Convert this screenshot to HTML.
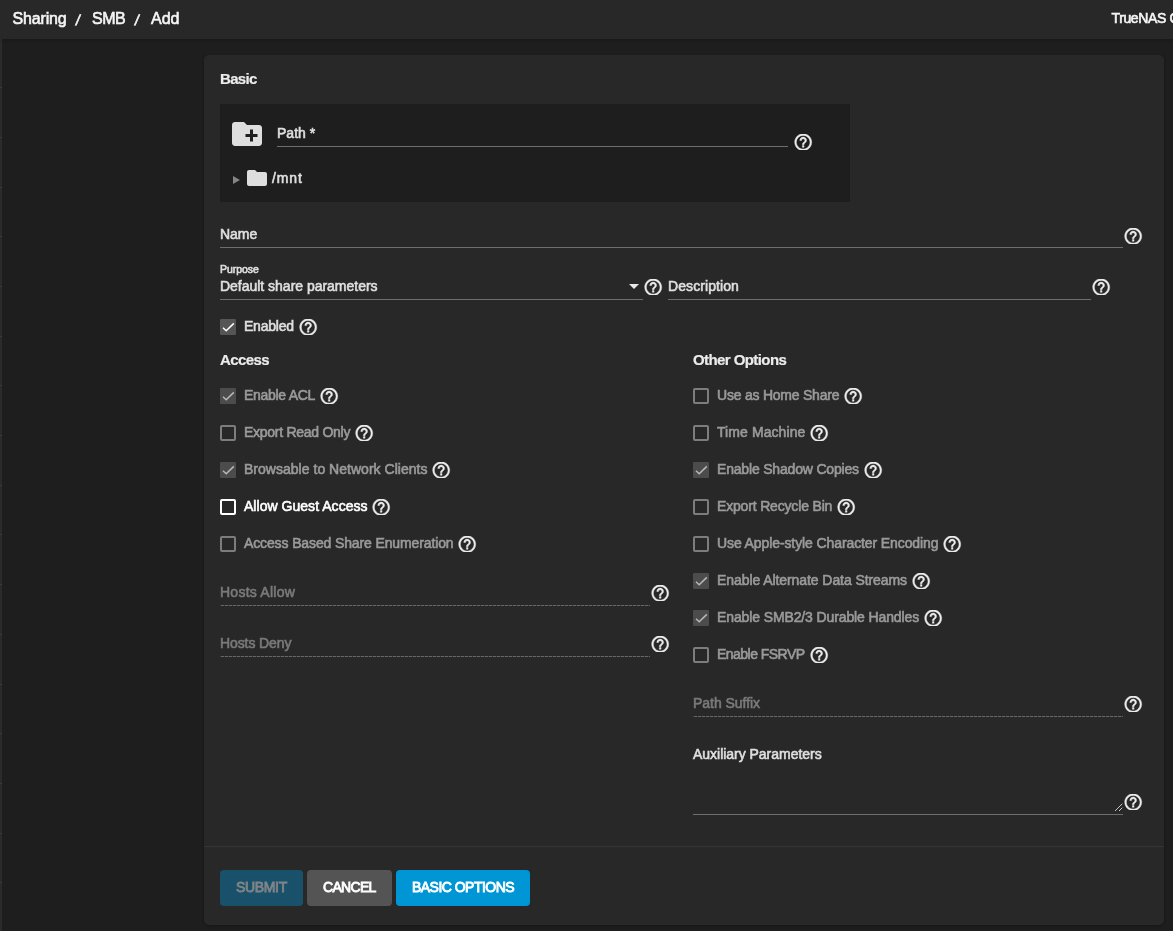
<!DOCTYPE html>
<html lang="en">
<head>
<meta charset="utf-8">
<title>Sharing / SMB / Add</title>
<style>
html,body{margin:0;padding:0}
body{width:1173px;height:931px;overflow:hidden;background:#1e1e1e;position:relative;font-family:"Liberation Sans", sans-serif;color:#dfdfdf;-webkit-font-smoothing:antialiased}
.layer{position:absolute;left:0;top:0;width:1173px;height:931px;will-change:transform;transform:translateZ(0)}
.t{position:absolute;white-space:nowrap;-webkit-text-stroke:0.6px currentColor}
.t.sl{transform:skewX(-9deg)}
.t.med{-webkit-text-stroke:0.85px currentColor}
.t.bold{-webkit-text-stroke:0.2px currentColor;color:#ececec}
.abs{position:absolute}
.strip{position:absolute;left:0;top:0;width:2px;height:931px;background:#2b2b2b}
.tick{position:absolute;left:0;width:2px;height:1px;background:#3a3a3a}
.topbar{position:absolute;left:2px;top:0;width:1171px;height:39px;background:#282828;box-shadow:0 1px 3px rgba(0,0,0,.25)}
.card{position:absolute;left:204px;top:55px;width:960px;height:870px;background:#282828;border-radius:5px;box-shadow:0 1px 3px rgba(0,0,0,.3)}
.pathbox{position:absolute;left:220px;top:104px;width:630px;height:98px;background:#1e1e1e}
.divider{position:absolute;left:204px;top:846px;width:960px;height:1px;background:#343434}
.ln{position:absolute;height:1px;background:#6e6e6e}
.ln.dash{background:repeating-linear-gradient(90deg,#3c3c3c 0,#3c3c3c 1px,#676767 1px,#676767 4px)}
.help{position:absolute;width:20.400px;height:16.200px;overflow:hidden;color:#ececec;display:block}
.help svg{position:absolute;left:0;top:-2.050px}
.cb{position:absolute;width:16px;height:16px;box-sizing:border-box;border:2px solid #fff;border-radius:2px;color:#fff}
.cb.dis{border:2px solid #7d7d7d;color:#b8b8b8}
.cb.on{border:0;background:#555;border-radius:1px}
.cb.on.dis{background:#4c4c4c}
.cb svg{position:absolute;left:0;top:0}
.tri{position:absolute;width:0;height:0;border-left:7px solid #858585;border-top:4.500px solid transparent;border-bottom:4.500px solid transparent}
.arrow{position:absolute;width:0;height:0;border-top:5px solid #e8e8e8;border-left:5px solid transparent;border-right:5px solid transparent}
.btn{position:absolute;top:870px;height:36px;border-radius:4px}
.submit{background:#19516b}
.cancel{background:#545454}
.basic{background:#0095d5}
</style>
</head>
<body>
<div class="layer">
<div class="strip"></div>
<div class="tick" style="top:87px"></div>
<div class="tick" style="top:137px"></div>
<div class="tick" style="top:187px"></div>
<div class="tick" style="top:236px"></div>
<div class="tick" style="top:286px"></div>
<div class="tick" style="top:336px"></div>
<div class="tick" style="top:385px"></div>
<div class="tick" style="top:435px"></div>
<div class="tick" style="top:485px"></div>
<div class="tick" style="top:534px"></div>
<div class="tick" style="top:584px"></div>
<div class="tick" style="top:634px"></div>
<div class="tick" style="top:684px"></div>
<div class="tick" style="top:733px"></div>
<div class="tick" style="top:783px"></div>
<div class="tick" style="top:833px"></div>
<div class="tick" style="top:882px"></div>
<div class="topbar"></div>
<div class="card"></div>
<div class="pathbox"></div>
<div class="divider"></div>
<span class="t " id="t1" style="left:12.5px;top:8.5px;font-size:16px;line-height:20px;color:#f6f6f6;letter-spacing:-0.154px;">Sharing</span>
<span class="t sl" id="t2" style="left:75.5px;top:10px;font-size:14.5px;line-height:20px;color:#f6f6f6;">/</span>
<span class="t " id="t3" style="left:92px;top:8.5px;font-size:16px;line-height:20px;color:#f6f6f6;letter-spacing:-0.494px;">SMB</span>
<span class="t sl" id="t4" style="left:134.5px;top:10px;font-size:14.5px;line-height:20px;color:#f6f6f6;">/</span>
<span class="t " id="t5" style="left:151px;top:8.5px;font-size:16px;line-height:20px;color:#f6f6f6;letter-spacing:0.006px;">Add</span>
<span class="t " id="t6" style="left:1111.5px;top:8px;font-size:14px;line-height:20px;color:#f6f6f6;letter-spacing:-0.375px;">TrueNAS C</span>
<span class="t  bold" id="t7" style="left:220px;top:70px;font-size:15px;line-height:18px;font-weight:700;letter-spacing:-0.696px;">Basic</span>
<svg class="abs" style="left:229px;top:116px" width="36" height="36" viewBox="0 0 24 24"><path fill="#dedede" d="M20 6h-8l-2-2H4c-1.110 0-1.990.89-1.990 2L2 18c0 1.110.89 2 2 2h16c1.110 0 2-.89 2-2V8c0-1.110-.89-2-2-2zm-1 8h-3v3h-2v-3h-3v-2h3V9h2v3h3v2z"/></svg>
<span class="t " id="t8" style="left:277px;top:124.5px;font-size:14px;line-height:17px;letter-spacing:0.006px;">Path *</span>
<div class="ln" style="left:277px;top:146px;width:511px;background:#6e6e6e;"></div>
<span class="help" style="left:792.8px;top:133.8px"><svg viewBox="0 0 24 24" width="20.400" height="20.400"><path fill="currentColor" stroke="currentColor" stroke-width=".5" d="M11 18h2v-2h-2v2zm1-16C6.48 2 2 6.48 2 12s4.48 10 10 10 10-4.48 10-10S17.52 2 12 2zm0 18c-4.41 0-8-3.59-8-8s3.590-8 8-8 8 3.590 8 8-3.590 8-8 8zm0-14c-2.210 0-4 1.790-4 4h2c0-1.100.9-2 2-2s2 .9 2 2c0 2-3 1.750-3 5h2c0-2.250 3-2.500 3-5 0-2.210-1.790-4-4-4z"/></svg></span>
<span class="tri" style="left:233px;top:175.500px"></span>
<svg class="abs" style="left:245px;top:166px" width="24" height="24" viewBox="0 0 24 24"><path fill="#dedede" d="M10 4H4c-1.100 0-1.990.9-1.990 2L2 18c0 1.100.9 2 2 2h16c1.100 0 2-.9 2-2V8c0-1.100-.9-2-2-2h-8l-2-2z"/></svg>
<span class="t " id="t9" style="left:272px;top:169.5px;font-size:14px;line-height:17px;letter-spacing:0.897px;">/mnt</span>
<span class="t " id="t10" style="left:220px;top:225.5px;font-size:14px;line-height:17px;letter-spacing:-0.013px;">Name</span>
<div class="ln" style="left:220px;top:247px;width:903px;background:#6e6e6e;"></div>
<span class="help" style="left:1122.8px;top:227.8px"><svg viewBox="0 0 24 24" width="20.400" height="20.400"><path fill="currentColor" stroke="currentColor" stroke-width=".5" d="M11 18h2v-2h-2v2zm1-16C6.48 2 2 6.48 2 12s4.48 10 10 10 10-4.48 10-10S17.52 2 12 2zm0 18c-4.41 0-8-3.59-8-8s3.590-8 8-8 8 3.590 8 8-3.590 8-8 8zm0-14c-2.210 0-4 1.790-4 4h2c0-1.100.9-2 2-2s2 .9 2 2c0 2-3 1.750-3 5h2c0-2.250 3-2.500 3-5 0-2.210-1.790-4-4-4z"/></svg></span>
<span class="t " id="t11" style="left:220px;top:263px;font-size:10.5px;line-height:12px;letter-spacing:-0.041px;">Purpose</span>
<span class="t " id="t12" style="left:220px;top:277.5px;font-size:14px;line-height:17px;letter-spacing:-0.017px;">Default share parameters</span>
<span class="arrow" style="left:628.500px;top:284px"></span>
<div class="ln" style="left:220px;top:299px;width:423px;background:#6e6e6e;"></div>
<span class="help" style="left:642.8px;top:278.8px"><svg viewBox="0 0 24 24" width="20.400" height="20.400"><path fill="currentColor" stroke="currentColor" stroke-width=".5" d="M11 18h2v-2h-2v2zm1-16C6.48 2 2 6.48 2 12s4.48 10 10 10 10-4.48 10-10S17.52 2 12 2zm0 18c-4.41 0-8-3.59-8-8s3.590-8 8-8 8 3.590 8 8-3.590 8-8 8zm0-14c-2.210 0-4 1.790-4 4h2c0-1.100.9-2 2-2s2 .9 2 2c0 2-3 1.750-3 5h2c0-2.250 3-2.500 3-5 0-2.210-1.790-4-4-4z"/></svg></span>
<span class="t " id="t13" style="left:668px;top:277.5px;font-size:14px;line-height:17px;letter-spacing:0.08px;">Description</span>
<div class="ln" style="left:668px;top:299px;width:423px;background:#6e6e6e;"></div>
<span class="help" style="left:1090.8px;top:278.8px"><svg viewBox="0 0 24 24" width="20.400" height="20.400"><path fill="currentColor" stroke="currentColor" stroke-width=".5" d="M11 18h2v-2h-2v2zm1-16C6.48 2 2 6.48 2 12s4.48 10 10 10 10-4.48 10-10S17.52 2 12 2zm0 18c-4.41 0-8-3.59-8-8s3.590-8 8-8 8 3.590 8 8-3.590 8-8 8zm0-14c-2.210 0-4 1.790-4 4h2c0-1.100.9-2 2-2s2 .9 2 2c0 2-3 1.750-3 5h2c0-2.250 3-2.500 3-5 0-2.210-1.790-4-4-4z"/></svg></span>
<span class="cb on" style="left:220px;top:319px"><svg viewBox="0 0 16 16" width="16" height="16"><path d="M3 8.700 6.200 11.700 13.800 4.400" fill="none" stroke="currentColor" stroke-width="1.500"/></svg></span>
<span class="t " id="t14" style="left:244px;top:317.5px;font-size:14px;line-height:17px;letter-spacing:-0.231px;">Enabled</span>
<span class="help" style="left:297.8px;top:318.8px"><svg viewBox="0 0 24 24" width="20.400" height="20.400"><path fill="currentColor" stroke="currentColor" stroke-width=".5" d="M11 18h2v-2h-2v2zm1-16C6.48 2 2 6.48 2 12s4.48 10 10 10 10-4.48 10-10S17.52 2 12 2zm0 18c-4.41 0-8-3.59-8-8s3.590-8 8-8 8 3.590 8 8-3.590 8-8 8zm0-14c-2.210 0-4 1.790-4 4h2c0-1.100.9-2 2-2s2 .9 2 2c0 2-3 1.750-3 5h2c0-2.250 3-2.500 3-5 0-2.210-1.790-4-4-4z"/></svg></span>
<span class="t  bold" id="t15" style="left:220px;top:351px;font-size:15px;line-height:18px;font-weight:700;letter-spacing:-0.605px;">Access</span>
<span class="t  bold" id="t16" style="left:693px;top:351px;font-size:15px;line-height:18px;font-weight:700;letter-spacing:-0.584px;">Other Options</span>
<span class="cb on dis" style="left:220px;top:388px"><svg viewBox="0 0 16 16" width="16" height="16"><path d="M3 8.700 6.200 11.700 13.800 4.400" fill="none" stroke="currentColor" stroke-width="1.500"/></svg></span>
<span class="t " id="t17" style="left:244px;top:386.5px;font-size:14px;line-height:17px;color:#9a9a9a;letter-spacing:-0.291px;">Enable ACL</span>
<span class="help" style="left:319px;top:387.8px"><svg viewBox="0 0 24 24" width="20.400" height="20.400"><path fill="currentColor" stroke="currentColor" stroke-width=".5" d="M11 18h2v-2h-2v2zm1-16C6.48 2 2 6.48 2 12s4.48 10 10 10 10-4.48 10-10S17.52 2 12 2zm0 18c-4.41 0-8-3.59-8-8s3.590-8 8-8 8 3.590 8 8-3.590 8-8 8zm0-14c-2.210 0-4 1.790-4 4h2c0-1.100.9-2 2-2s2 .9 2 2c0 2-3 1.750-3 5h2c0-2.250 3-2.500 3-5 0-2.210-1.790-4-4-4z"/></svg></span>
<span class="cb dis" style="left:220px;top:425px"></span>
<span class="t " id="t18" style="left:244px;top:423.5px;font-size:14px;line-height:17px;color:#9a9a9a;letter-spacing:-0.27px;">Export Read Only</span>
<span class="help" style="left:354.3px;top:424.8px"><svg viewBox="0 0 24 24" width="20.400" height="20.400"><path fill="currentColor" stroke="currentColor" stroke-width=".5" d="M11 18h2v-2h-2v2zm1-16C6.48 2 2 6.48 2 12s4.48 10 10 10 10-4.48 10-10S17.52 2 12 2zm0 18c-4.41 0-8-3.59-8-8s3.590-8 8-8 8 3.590 8 8-3.590 8-8 8zm0-14c-2.210 0-4 1.790-4 4h2c0-1.100.9-2 2-2s2 .9 2 2c0 2-3 1.750-3 5h2c0-2.250 3-2.500 3-5 0-2.210-1.790-4-4-4z"/></svg></span>
<span class="cb on dis" style="left:220px;top:462px"><svg viewBox="0 0 16 16" width="16" height="16"><path d="M3 8.700 6.200 11.700 13.800 4.400" fill="none" stroke="currentColor" stroke-width="1.500"/></svg></span>
<span class="t " id="t19" style="left:244px;top:460.5px;font-size:14px;line-height:17px;color:#9a9a9a;letter-spacing:0.021px;">Browsable to Network Clients</span>
<span class="help" style="left:431px;top:461.8px"><svg viewBox="0 0 24 24" width="20.400" height="20.400"><path fill="currentColor" stroke="currentColor" stroke-width=".5" d="M11 18h2v-2h-2v2zm1-16C6.48 2 2 6.48 2 12s4.48 10 10 10 10-4.48 10-10S17.52 2 12 2zm0 18c-4.41 0-8-3.59-8-8s3.590-8 8-8 8 3.590 8 8-3.590 8-8 8zm0-14c-2.210 0-4 1.790-4 4h2c0-1.100.9-2 2-2s2 .9 2 2c0 2-3 1.750-3 5h2c0-2.250 3-2.500 3-5 0-2.210-1.790-4-4-4z"/></svg></span>
<span class="cb" style="left:220px;top:499px"></span>
<span class="t " id="t20" style="left:244px;top:497.5px;font-size:14px;line-height:17px;color:#fff;letter-spacing:0.035px;">Allow Guest Access</span>
<span class="help" style="left:371.1px;top:498.8px"><svg viewBox="0 0 24 24" width="20.400" height="20.400"><path fill="currentColor" stroke="currentColor" stroke-width=".5" d="M11 18h2v-2h-2v2zm1-16C6.48 2 2 6.48 2 12s4.48 10 10 10 10-4.48 10-10S17.52 2 12 2zm0 18c-4.41 0-8-3.59-8-8s3.590-8 8-8 8 3.590 8 8-3.590 8-8 8zm0-14c-2.210 0-4 1.790-4 4h2c0-1.100.9-2 2-2s2 .9 2 2c0 2-3 1.750-3 5h2c0-2.250 3-2.500 3-5 0-2.210-1.790-4-4-4z"/></svg></span>
<span class="cb dis" style="left:220px;top:536px"></span>
<span class="t " id="t21" style="left:244px;top:534.5px;font-size:14px;line-height:17px;color:#9a9a9a;letter-spacing:-0.125px;">Access Based Share Enumeration</span>
<span class="help" style="left:457px;top:535.8px"><svg viewBox="0 0 24 24" width="20.400" height="20.400"><path fill="currentColor" stroke="currentColor" stroke-width=".5" d="M11 18h2v-2h-2v2zm1-16C6.48 2 2 6.48 2 12s4.48 10 10 10 10-4.48 10-10S17.52 2 12 2zm0 18c-4.41 0-8-3.59-8-8s3.590-8 8-8 8 3.590 8 8-3.590 8-8 8zm0-14c-2.210 0-4 1.790-4 4h2c0-1.100.9-2 2-2s2 .9 2 2c0 2-3 1.750-3 5h2c0-2.250 3-2.500 3-5 0-2.210-1.790-4-4-4z"/></svg></span>
<span class="cb dis" style="left:693px;top:388px"></span>
<span class="t " id="t22" style="left:717px;top:386.5px;font-size:14px;line-height:17px;color:#9a9a9a;letter-spacing:-0.225px;">Use as Home Share</span>
<span class="help" style="left:843.3px;top:387.8px"><svg viewBox="0 0 24 24" width="20.400" height="20.400"><path fill="currentColor" stroke="currentColor" stroke-width=".5" d="M11 18h2v-2h-2v2zm1-16C6.48 2 2 6.48 2 12s4.48 10 10 10 10-4.48 10-10S17.52 2 12 2zm0 18c-4.41 0-8-3.59-8-8s3.590-8 8-8 8 3.590 8 8-3.590 8-8 8zm0-14c-2.210 0-4 1.790-4 4h2c0-1.100.9-2 2-2s2 .9 2 2c0 2-3 1.750-3 5h2c0-2.250 3-2.500 3-5 0-2.210-1.790-4-4-4z"/></svg></span>
<span class="cb dis" style="left:693px;top:425px"></span>
<span class="t " id="t23" style="left:717px;top:423.5px;font-size:14px;line-height:17px;color:#9a9a9a;letter-spacing:0.084px;">Time Machine</span>
<span class="help" style="left:809.3px;top:424.8px"><svg viewBox="0 0 24 24" width="20.400" height="20.400"><path fill="currentColor" stroke="currentColor" stroke-width=".5" d="M11 18h2v-2h-2v2zm1-16C6.48 2 2 6.48 2 12s4.48 10 10 10 10-4.48 10-10S17.52 2 12 2zm0 18c-4.41 0-8-3.59-8-8s3.590-8 8-8 8 3.590 8 8-3.590 8-8 8zm0-14c-2.210 0-4 1.790-4 4h2c0-1.100.9-2 2-2s2 .9 2 2c0 2-3 1.750-3 5h2c0-2.250 3-2.500 3-5 0-2.210-1.790-4-4-4z"/></svg></span>
<span class="cb on dis" style="left:693px;top:462px"><svg viewBox="0 0 16 16" width="16" height="16"><path d="M3 8.700 6.200 11.700 13.800 4.400" fill="none" stroke="currentColor" stroke-width="1.500"/></svg></span>
<span class="t " id="t24" style="left:717px;top:460.5px;font-size:14px;line-height:17px;color:#9a9a9a;letter-spacing:-0.182px;">Enable Shadow Copies</span>
<span class="help" style="left:863px;top:461.8px"><svg viewBox="0 0 24 24" width="20.400" height="20.400"><path fill="currentColor" stroke="currentColor" stroke-width=".5" d="M11 18h2v-2h-2v2zm1-16C6.48 2 2 6.48 2 12s4.48 10 10 10 10-4.48 10-10S17.52 2 12 2zm0 18c-4.41 0-8-3.59-8-8s3.590-8 8-8 8 3.590 8 8-3.590 8-8 8zm0-14c-2.210 0-4 1.790-4 4h2c0-1.100.9-2 2-2s2 .9 2 2c0 2-3 1.750-3 5h2c0-2.250 3-2.500 3-5 0-2.210-1.790-4-4-4z"/></svg></span>
<span class="cb dis" style="left:693px;top:499px"></span>
<span class="t " id="t25" style="left:717px;top:497.5px;font-size:14px;line-height:17px;color:#9a9a9a;letter-spacing:-0.171px;">Export Recycle Bin</span>
<span class="help" style="left:836.3px;top:498.8px"><svg viewBox="0 0 24 24" width="20.400" height="20.400"><path fill="currentColor" stroke="currentColor" stroke-width=".5" d="M11 18h2v-2h-2v2zm1-16C6.48 2 2 6.48 2 12s4.48 10 10 10 10-4.48 10-10S17.52 2 12 2zm0 18c-4.41 0-8-3.59-8-8s3.590-8 8-8 8 3.590 8 8-3.590 8-8 8zm0-14c-2.210 0-4 1.790-4 4h2c0-1.100.9-2 2-2s2 .9 2 2c0 2-3 1.750-3 5h2c0-2.250 3-2.500 3-5 0-2.210-1.790-4-4-4z"/></svg></span>
<span class="cb dis" style="left:693px;top:536px"></span>
<span class="t " id="t26" style="left:717px;top:534.5px;font-size:14px;line-height:17px;color:#9a9a9a;letter-spacing:-0.103px;">Use Apple-style Character Encoding</span>
<span class="help" style="left:942.4px;top:535.8px"><svg viewBox="0 0 24 24" width="20.400" height="20.400"><path fill="currentColor" stroke="currentColor" stroke-width=".5" d="M11 18h2v-2h-2v2zm1-16C6.48 2 2 6.48 2 12s4.48 10 10 10 10-4.48 10-10S17.52 2 12 2zm0 18c-4.41 0-8-3.59-8-8s3.590-8 8-8 8 3.590 8 8-3.590 8-8 8zm0-14c-2.210 0-4 1.790-4 4h2c0-1.100.9-2 2-2s2 .9 2 2c0 2-3 1.750-3 5h2c0-2.250 3-2.500 3-5 0-2.210-1.790-4-4-4z"/></svg></span>
<span class="cb on dis" style="left:693px;top:573px"><svg viewBox="0 0 16 16" width="16" height="16"><path d="M3 8.700 6.200 11.700 13.800 4.400" fill="none" stroke="currentColor" stroke-width="1.500"/></svg></span>
<span class="t " id="t27" style="left:717px;top:571.5px;font-size:14px;line-height:17px;color:#9a9a9a;letter-spacing:-0.075px;">Enable Alternate Data Streams</span>
<span class="help" style="left:911px;top:572.8px"><svg viewBox="0 0 24 24" width="20.400" height="20.400"><path fill="currentColor" stroke="currentColor" stroke-width=".5" d="M11 18h2v-2h-2v2zm1-16C6.48 2 2 6.48 2 12s4.48 10 10 10 10-4.48 10-10S17.52 2 12 2zm0 18c-4.41 0-8-3.59-8-8s3.590-8 8-8 8 3.590 8 8-3.590 8-8 8zm0-14c-2.210 0-4 1.790-4 4h2c0-1.100.9-2 2-2s2 .9 2 2c0 2-3 1.750-3 5h2c0-2.250 3-2.500 3-5 0-2.210-1.790-4-4-4z"/></svg></span>
<span class="cb on dis" style="left:693px;top:610px"><svg viewBox="0 0 16 16" width="16" height="16"><path d="M3 8.700 6.200 11.700 13.800 4.400" fill="none" stroke="currentColor" stroke-width="1.500"/></svg></span>
<span class="t " id="t28" style="left:717px;top:608.5px;font-size:14px;line-height:17px;color:#9a9a9a;letter-spacing:-0.116px;">Enable SMB2/3 Durable Handles</span>
<span class="help" style="left:923.1px;top:609.8px"><svg viewBox="0 0 24 24" width="20.400" height="20.400"><path fill="currentColor" stroke="currentColor" stroke-width=".5" d="M11 18h2v-2h-2v2zm1-16C6.48 2 2 6.48 2 12s4.48 10 10 10 10-4.48 10-10S17.52 2 12 2zm0 18c-4.41 0-8-3.59-8-8s3.590-8 8-8 8 3.590 8 8-3.590 8-8 8zm0-14c-2.210 0-4 1.790-4 4h2c0-1.100.9-2 2-2s2 .9 2 2c0 2-3 1.750-3 5h2c0-2.250 3-2.500 3-5 0-2.210-1.790-4-4-4z"/></svg></span>
<span class="cb dis" style="left:693px;top:647px"></span>
<span class="t " id="t29" style="left:717px;top:645.5px;font-size:14px;line-height:17px;color:#9a9a9a;letter-spacing:-0.534px;">Enable FSRVP</span>
<span class="help" style="left:808.7px;top:646.8px"><svg viewBox="0 0 24 24" width="20.400" height="20.400"><path fill="currentColor" stroke="currentColor" stroke-width=".5" d="M11 18h2v-2h-2v2zm1-16C6.48 2 2 6.48 2 12s4.48 10 10 10 10-4.48 10-10S17.52 2 12 2zm0 18c-4.41 0-8-3.59-8-8s3.590-8 8-8 8 3.590 8 8-3.590 8-8 8zm0-14c-2.210 0-4 1.790-4 4h2c0-1.100.9-2 2-2s2 .9 2 2c0 2-3 1.750-3 5h2c0-2.250 3-2.500 3-5 0-2.210-1.790-4-4-4z"/></svg></span>
<span class="t " id="t30" style="left:220px;top:583.5px;font-size:14px;line-height:17px;color:#7a7a7a;letter-spacing:0.244px;">Hosts Allow</span>
<div class="ln dash" style="left:220px;top:605px;width:430px;"></div>
<span class="help" style="left:649.8px;top:584.8px"><svg viewBox="0 0 24 24" width="20.400" height="20.400"><path fill="currentColor" stroke="currentColor" stroke-width=".5" d="M11 18h2v-2h-2v2zm1-16C6.48 2 2 6.48 2 12s4.48 10 10 10 10-4.48 10-10S17.52 2 12 2zm0 18c-4.41 0-8-3.59-8-8s3.590-8 8-8 8 3.590 8 8-3.590 8-8 8zm0-14c-2.210 0-4 1.790-4 4h2c0-1.100.9-2 2-2s2 .9 2 2c0 2-3 1.750-3 5h2c0-2.250 3-2.500 3-5 0-2.210-1.790-4-4-4z"/></svg></span>
<span class="t " id="t31" style="left:220px;top:634.5px;font-size:14px;line-height:17px;color:#7a7a7a;letter-spacing:-0.095px;">Hosts Deny</span>
<div class="ln dash" style="left:220px;top:656px;width:430px;"></div>
<span class="help" style="left:649.8px;top:635.8px"><svg viewBox="0 0 24 24" width="20.400" height="20.400"><path fill="currentColor" stroke="currentColor" stroke-width=".5" d="M11 18h2v-2h-2v2zm1-16C6.48 2 2 6.48 2 12s4.48 10 10 10 10-4.48 10-10S17.52 2 12 2zm0 18c-4.41 0-8-3.59-8-8s3.590-8 8-8 8 3.590 8 8-3.590 8-8 8zm0-14c-2.210 0-4 1.790-4 4h2c0-1.100.9-2 2-2s2 .9 2 2c0 2-3 1.750-3 5h2c0-2.250 3-2.500 3-5 0-2.210-1.790-4-4-4z"/></svg></span>
<span class="t " id="t32" style="left:693px;top:694.5px;font-size:14px;line-height:17px;color:#7a7a7a;letter-spacing:-0.037px;">Path Suffix</span>
<div class="ln dash" style="left:693px;top:716px;width:430px;"></div>
<span class="help" style="left:1122.8px;top:695.8px"><svg viewBox="0 0 24 24" width="20.400" height="20.400"><path fill="currentColor" stroke="currentColor" stroke-width=".5" d="M11 18h2v-2h-2v2zm1-16C6.48 2 2 6.48 2 12s4.48 10 10 10 10-4.48 10-10S17.52 2 12 2zm0 18c-4.41 0-8-3.59-8-8s3.590-8 8-8 8 3.590 8 8-3.590 8-8 8zm0-14c-2.210 0-4 1.790-4 4h2c0-1.100.9-2 2-2s2 .9 2 2c0 2-3 1.750-3 5h2c0-2.250 3-2.500 3-5 0-2.210-1.790-4-4-4z"/></svg></span>
<span class="t " id="t33" style="left:693px;top:745.5px;font-size:14px;line-height:17px;letter-spacing:-0.026px;">Auxiliary Parameters</span>
<div class="ln" style="left:693px;top:814px;width:430px;background:#6e6e6e;"></div>
<svg class="abs" style="left:1114px;top:803px" width="9" height="9" viewBox="0 0 9 9"><path d="M1 8 8.300.7M5 8 8.300 4.700" stroke="#c8c8c8" stroke-width="1" fill="none"/></svg>
<span class="help" style="left:1122.8px;top:793.8px"><svg viewBox="0 0 24 24" width="20.400" height="20.400"><path fill="currentColor" stroke="currentColor" stroke-width=".5" d="M11 18h2v-2h-2v2zm1-16C6.48 2 2 6.48 2 12s4.48 10 10 10 10-4.48 10-10S17.52 2 12 2zm0 18c-4.41 0-8-3.59-8-8s3.590-8 8-8 8 3.590 8 8-3.590 8-8 8zm0-14c-2.210 0-4 1.790-4 4h2c0-1.100.9-2 2-2s2 .9 2 2c0 2-3 1.750-3 5h2c0-2.250 3-2.500 3-5 0-2.210-1.790-4-4-4z"/></svg></span>
<div class="btn submit" style="left:220px;width:83px"></div>
<div class="btn cancel" style="left:307px;width:85px"></div>
<div class="btn basic" style="left:396px;width:134px"></div>
<span class="t  med" id="t34" style="left:236px;top:878.5px;font-size:14px;line-height:17px;font-weight:500;color:#7f8487;letter-spacing:-0.338px;">SUBMIT</span>
<span class="t  med" id="t35" style="left:323px;top:878.5px;font-size:14px;line-height:17px;font-weight:500;color:#fff;letter-spacing:-0.696px;">CANCEL</span>
<span class="t  med" id="t36" style="left:412px;top:878.5px;font-size:14px;line-height:17px;font-weight:500;color:#fff;letter-spacing:-0.527px;">BASIC OPTIONS</span>
</div>
</body>
</html>
